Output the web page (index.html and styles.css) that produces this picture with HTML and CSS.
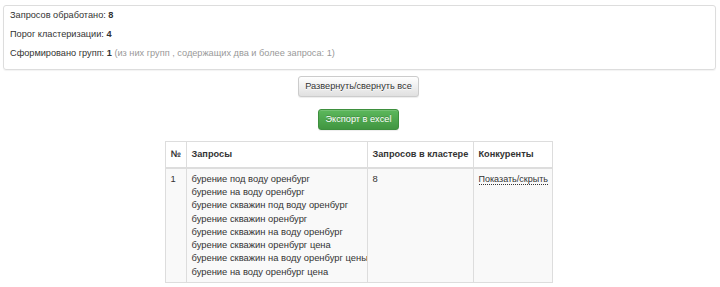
FILE: index.html
```html
<!DOCTYPE html>
<html lang="ru">
<head>
<meta charset="utf-8">
<link rel="stylesheet" href="styles.css">
</head>
<body>
<div class="page">
  <div class="panel">
    <p>Запросов обработано: <b>8</b></p>
    <p>Порог кластеризации: <b>4</b></p>
    <p>Сформировано групп: <b>1</b> <span class="muted">(из них групп , содержащих два и более запроса: <b>1</b>)</span></p>
  </div>
  <div class="actions">
    <button class="btn btn-default">Развернуть/свернуть все</button>
    <button class="btn btn-success">Экспорт в excel</button>
  </div>
  <table class="clusters">
    <colgroup>
      <col class="c-num"><col class="c-q"><col class="c-cnt"><col class="c-comp">
    </colgroup>
    <thead>
      <tr><th>№</th><th>Запросы</th><th>Запросов в кластере</th><th>Конкуренты</th></tr>
    </thead>
    <tbody>
      <tr>
        <td>1</td>
        <td>бурение под воду оренбург<br>бурение на воду оренбург<br>бурение скважин под воду оренбург<br>бурение скважин оренбург<br>бурение скважин на воду оренбург<br>бурение скважин оренбург цена<br>бурение скважин на воду оренбург цены<br>бурение на воду оренбург цена</td>
        <td>8</td>
        <td><span class="toggle">Показать/скрыть</span></td>
      </tr>
    </tbody>
  </table>
</div>
</body>
</html>
```
FILE: styles.css
```css
html, body {
  margin: 0;
  padding: 0;
  background: #fff;
}
body {
  font-family: "Liberation Sans", Arial, sans-serif;
  font-size: 9.2px;
  line-height: 13.2px;
  color: #333;
}
.page {
  padding: 5px 6px 0 3px;
  display: flex;
  flex-direction: column;
  align-items: center;
}
.panel {
  align-self: stretch;
  margin-right: -2px;
  border: 1px solid #ddd;
  border-radius: 3px;
  padding: 3px 6px 2px;
  box-shadow: 0 1px 1px rgba(0,0,0,0.05);
}
.panel p {
  margin: 0 0 6px;
}
.panel b {
  font-weight: bold;
}
.muted {
  color: #999;
}
.muted b {
  font-weight: normal;
}
.actions {
  display: flex;
  flex-direction: column;
  align-items: center;
  gap: 12px;
  margin-top: 6px;
}
.btn {
  font-family: inherit;
  font-size: 9.2px;
  line-height: 13px;
  padding: 3px 6px;
  border: 1px solid #ccc;
  border-radius: 3px;
  margin: 0;
  cursor: pointer;
}
.btn-default {
  color: #333;
  background-image: linear-gradient(to bottom, #fff 0, #e0e0e0 100%);
  border-color: #ccc;
  text-shadow: 0 1px 0 #fff;
  box-shadow: inset 0 1px 0 rgba(255,255,255,.15), 0 1px 1px rgba(0,0,0,.075);
}
.btn-success {
  color: #fff;
  background-image: linear-gradient(to bottom, #5cb85c 0, #419641 100%);
  border-color: #3e8f3e;
  text-shadow: 0 -1px 0 rgba(0,0,0,.2);
  box-shadow: inset 0 1px 0 rgba(255,255,255,.15), 0 1px 1px rgba(0,0,0,.075);
  padding: 3px 7px;
}
.clusters {
  margin-top: 11px;
  width: 387px;
  table-layout: fixed;
  border-collapse: collapse;
  border: 1px solid #ddd;
  font-size: 9.4px;
}
.c-num { width: 21px; }
.c-q { width: 181px; }
.c-cnt { width: 106px; }
.c-comp { width: 79px; }
.clusters th, .clusters td {
  border: 1px solid #ddd;
  text-align: left;
  vertical-align: top;
  padding: 0 5px;
  white-space: nowrap;
  overflow: hidden;
}
.clusters th {
  font-weight: bold;
  font-size: 9.2px;
  height: 25px;
  border-bottom: 2px solid #ddd;
  vertical-align: middle;
}
.clusters td {
  padding-top: 3px;
  padding-bottom: 4px;
  line-height: 13.3px;
}
.clusters tbody tr {
  background: #f9f9f9;
}
.toggle {
  font-size: 9px;
  border-bottom: 1px dotted #333;
  color: #333;
  cursor: pointer;
}
```
